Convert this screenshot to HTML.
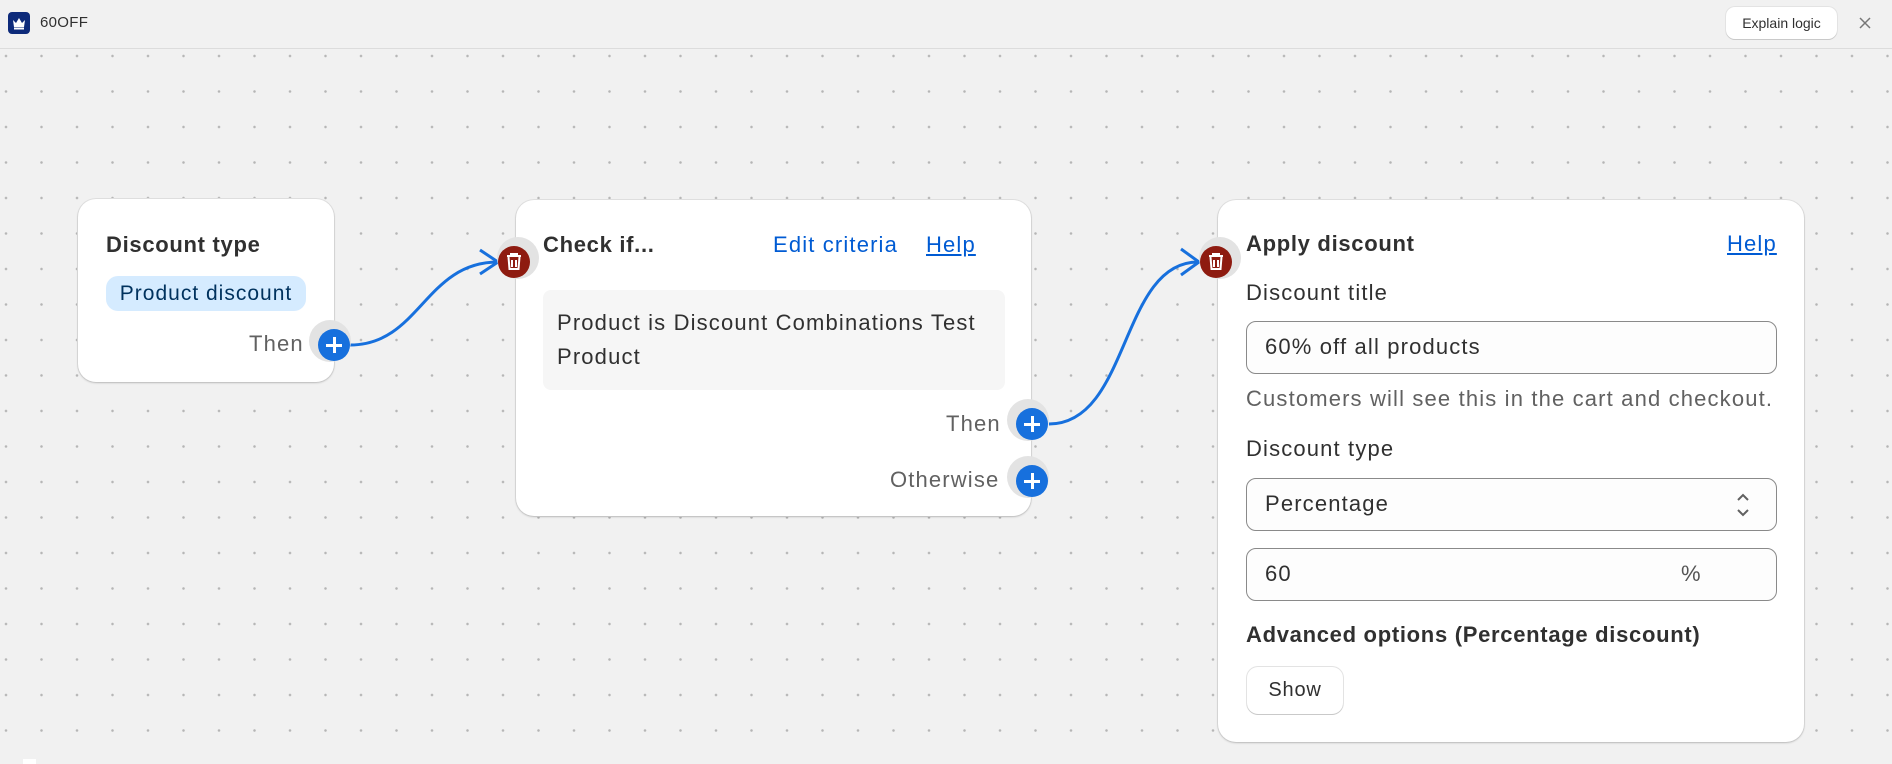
<!DOCTYPE html>
<html><head><meta charset="utf-8"><style>
*{box-sizing:border-box;margin:0;padding:0}
body{width:1892px;height:764px;overflow:hidden;background:#f1f1f1;font-family:"Liberation Sans",sans-serif;color:#303030;position:relative}
.canvas{position:absolute;left:0;top:49px;width:1892px;height:715px;background-color:#f1f1f1;background-image:radial-gradient(circle,#b5b5b5 1.1px,transparent 1.4px);background-size:35.5px 35.5px;background-position:-11.75px -10.75px}
.hdr{position:absolute;left:0;top:0;width:1892px;height:49px;background:#f1f1f1;border-bottom:1px solid #dcdcdc}
.logo{position:absolute;left:8px;top:12px;width:22px;height:22px;background:#0d2a7a;border-radius:4px}
.ttl{position:absolute;left:40px;top:14px;font-size:15px;color:#303030;letter-spacing:.3px}
.btn{position:absolute;background:#fff;border-radius:9px;box-shadow:0 1px 0 #c9c9c9,0 0 0 1px #e3e3e3;font-size:14px;color:#303030;text-align:center}
.card{position:absolute;background:#fff;border-radius:18px;box-shadow:0 1px 2px rgba(0,0,0,.18),0 0 0 1px #e2e2e2}
.t{position:absolute;white-space:nowrap;font-size:22px;line-height:1;letter-spacing:1.15px}
.b{font-weight:bold;letter-spacing:.7px}
.lnk{color:#005bd3}
.u{text-decoration:underline}
.grey{color:#616161}
.plus{position:absolute;width:32px;height:32px;margin:-16px 0 0 -16px;border-radius:50%;background:#1770dd;box-shadow:-4px -4px 0 5px #e3e3e3}
.plus:before,.plus:after{content:"";position:absolute;background:#fff;left:8px;top:15px;width:16px;height:2.5px}
.plus:after{left:15px;top:8px;width:2.5px;height:16px}
.trash{position:absolute;width:32px;height:32px;margin:-16px 0 0 -16px;border-radius:50%;background:#8e1b10;box-shadow:4px -4px 0 5px #e3e3e3}
.inp{position:absolute;border:1px solid #8a8a8a;border-radius:10px;background:#fdfdfd}
</style></head><body>
<div class="canvas"></div>
<div class="hdr">
 <div class="logo"><svg width="22" height="22" viewBox="0 0 22 22"><path d="M5 8l3 3 3-5 3 5 3-3-1 7H6z" fill="#fff"/><rect x="6" y="15.5" width="10" height="2" fill="#fff"/></svg></div>
 <div class="ttl">60OFF</div>
 <div class="btn" style="left:1726px;top:7px;width:111px;height:32px;line-height:32px">Explain logic</div>
 <svg style="position:absolute;left:1858px;top:16px" width="14" height="14"><path d="M2 2l10 10M12 2L2 12" stroke="#777" stroke-width="1.5"/></svg>
</div>
<div style="position:absolute;left:23px;top:759px;width:13px;height:5px;background:#fff"></div>

<svg style="position:absolute;left:0;top:0" width="1892" height="764">
 <path d="M350 345 C420 345,425 262,498 262" fill="none" stroke="#1770dd" stroke-width="3"/>
 <path d="M480 250 L498 262 L480 274" fill="none" stroke="#1770dd" stroke-width="3"/>
 <path d="M1049 424 C1130 424,1120 262,1198 262" fill="none" stroke="#1770dd" stroke-width="3"/>
 <path d="M1181 249 L1199 262 L1181 275" fill="none" stroke="#1770dd" stroke-width="3"/>
</svg>

<!-- card 1 -->
<div class="card" style="left:78px;top:199px;width:256px;height:183px"></div>
<div class="t b" style="left:106px;top:234px">Discount type</div>
<div style="position:absolute;left:106px;top:276px;width:200px;height:35px;border-radius:12px;background:#d5ebff;color:#00325e;font-size:21px;letter-spacing:1px;line-height:35px;text-align:center">Product discount</div>
<div class="t grey" style="left:249px;top:333px">Then</div>
<div class="plus" style="left:334px;top:345px"></div>

<!-- card 2 -->
<div class="card" style="left:516px;top:200px;width:515px;height:316px"></div>
<div class="t b" style="left:543px;top:234px">Check if...</div>
<div class="t lnk" style="left:773px;top:234px">Edit criteria</div>
<div class="t lnk u" style="left:926px;top:234px">Help</div>
<div style="position:absolute;left:543px;top:290px;width:462px;height:100px;background:#f6f6f6;border-radius:8px"></div>
<div class="t" style="left:557px;top:306px;line-height:34px;white-space:normal;width:440px">Product is Discount Combinations Test Product</div>
<div class="t grey" style="left:946px;top:413px">Then</div>
<div class="t grey" style="left:890px;top:469px">Otherwise</div>
<div class="plus" style="left:1032px;top:424px"></div>
<div class="plus" style="left:1032px;top:481px"></div>
<div class="trash" style="left:514px;top:262px"><svg width="32" height="32" viewBox="0 0 32 32"><path d="M9 10h14M13 10V8h6v2M10.5 11l1 12h9l1-12M14 14v7M18 14v7" fill="none" stroke="#fff" stroke-width="2"/></svg></div>

<!-- card 3 -->
<div class="card" style="left:1218px;top:200px;width:586px;height:542px"></div>
<div class="trash" style="left:1216px;top:262px"><svg width="32" height="32" viewBox="0 0 32 32"><path d="M9 10h14M13 10V8h6v2M10.5 11l1 12h9l1-12M14 14v7M18 14v7" fill="none" stroke="#fff" stroke-width="2"/></svg></div>
<div class="t b" style="left:1246px;top:233px">Apply discount</div>
<div class="t lnk u" style="left:1727px;top:233px">Help</div>
<div class="t" style="left:1246px;top:282px">Discount title</div>
<div class="inp" style="left:1246px;top:321px;width:531px;height:53px"></div>
<div class="t" style="left:1265px;top:336px">60% off all products</div>
<div class="t grey" style="left:1246px;top:388px">Customers will see this in the cart and checkout.</div>
<div class="t" style="left:1246px;top:438px">Discount type</div>
<div class="inp" style="left:1246px;top:478px;width:531px;height:53px"></div>
<div class="t" style="left:1265px;top:493px">Percentage</div>
<svg style="position:absolute;left:1735px;top:492px" width="16" height="26"><path d="M3 8l5-5 5 5M3 18l5 5 5-5" fill="none" stroke="#616161" stroke-width="2"/></svg>
<div class="inp" style="left:1246px;top:548px;width:531px;height:53px"></div>
<div class="t" style="left:1265px;top:563px">60</div>
<div class="t" style="left:1681px;top:563px;color:#555">%</div>
<div class="t b" style="left:1246px;top:624px">Advanced options (Percentage discount)</div>
<div class="btn" style="left:1247px;top:667px;width:96px;height:47px;line-height:47px;font-size:20px;letter-spacing:.8px;border-radius:11px">Show</div>
</body></html>
